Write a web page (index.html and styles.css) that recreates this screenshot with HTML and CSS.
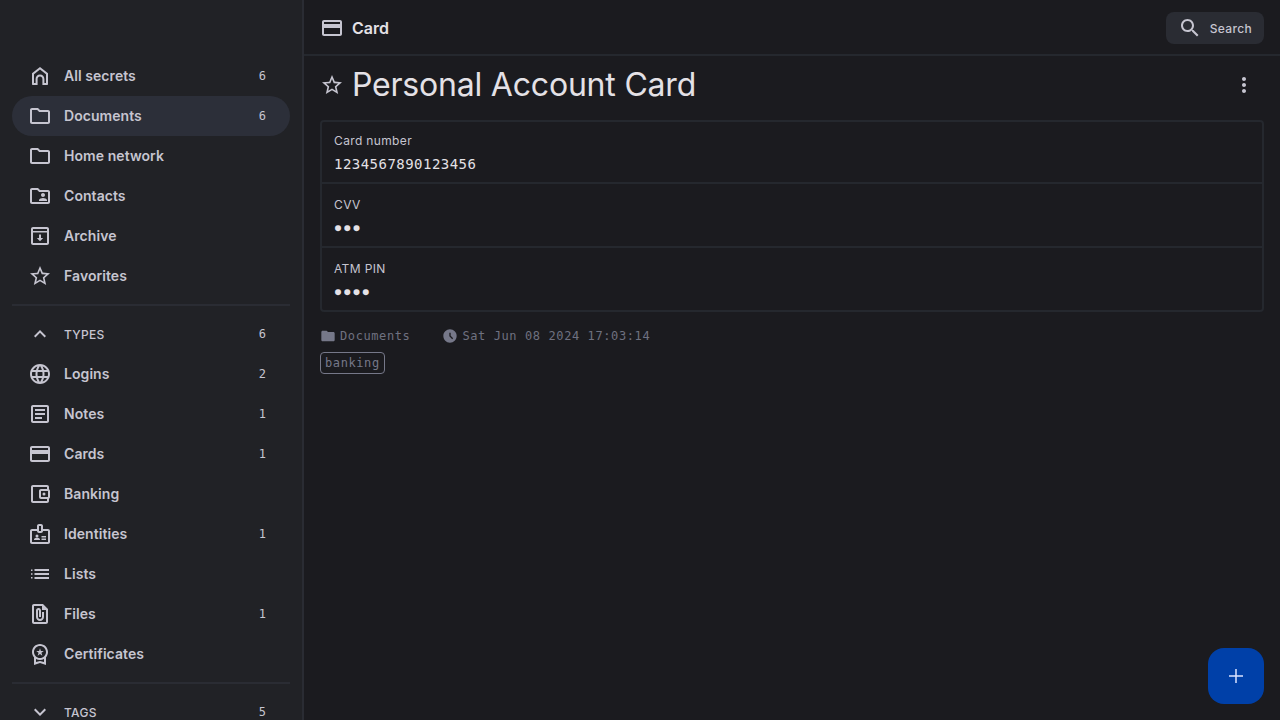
FILE: index.html
```html
<!DOCTYPE html>
<html lang="en">
<head>
  <meta charset="UTF-8" />
  <title>Personal Account Card</title>
  <link rel="stylesheet" href="styles.css">
</head>
<body>

<aside class="sidebar">
  <a class="nav-item">
    <svg class="icon" viewBox="0 0 24 24"><path d="M12 3 4 9.2V20c0 .6.4 1 1 1h4.600v-6c0-1.400 1-2.400 2.400-2.400s2.400 1 2.400 2.400v6H19c.6 0 1-.4 1-1V9.200zM12 5.500l6 4.700V19h-1.600v-4c0-2.500-1.900-4.400-4.400-4.400S7.600 12.500 7.600 15v4H6v-8.800z"/></svg>
    <span class="nav-label">All secrets</span><span class="count">6</span>
  </a>
  <a class="nav-item active">
    <svg class="icon" viewBox="0 0 24 24"><path d="M20 6h-8l-2-2H4c-1.100 0-1.990.9-1.990 2L2 18c0 1.100.9 2 2 2h16c1.100 0 2-.9 2-2V8c0-1.100-.9-2-2-2zm0 12H4V6h5.170l2 2H20v10z"/></svg>
    <span class="nav-label">Documents</span><span class="count">6</span>
  </a>
  <a class="nav-item">
    <svg class="icon" viewBox="0 0 24 24"><path d="M20 6h-8l-2-2H4c-1.100 0-1.990.9-1.990 2L2 18c0 1.100.9 2 2 2h16c1.100 0 2-.9 2-2V8c0-1.100-.9-2-2-2zm0 12H4V6h5.170l2 2H20v10z"/></svg>
    <span class="nav-label">Home network</span>
  </a>
  <a class="nav-item">
    <svg class="icon" viewBox="0 0 24 24"><path d="M20 6h-8l-2-2H4c-1.100 0-2 .9-2 2v12c0 1.100.9 2 2 2h16c1.100 0 2-.9 2-2V8c0-1.100-.9-2-2-2zm0 12H4V6h5.170l2 2H20v10zm-5-5c1.100 0 2-.9 2-2s-.9-2-2-2-2 .9-2 2 .9 2 2 2zm-4 4h8v-1c0-1.330-2.670-2-4-2s-4 .67-4 2v1z"/></svg>
    <span class="nav-label">Contacts</span>
  </a>
  <a class="nav-item">
    <svg class="icon" viewBox="0 0 24 24"><path d="M19 3H5c-1.100 0-2 .9-2 2v14c0 1.100.9 2 2 2h14c1.100 0 2-.9 2-2V5c0-1.100-.9-2-2-2zM5 5h14v2H5V5zm0 14V8.500h14V19H5zm8-8.500h-2V14H8.800l3.200 3.200 3.200-3.200H13v-3.500z"/></svg>
    <span class="nav-label">Archive</span>
  </a>
  <a class="nav-item">
    <svg class="icon" viewBox="0 0 24 24"><path d="M22 9.240l-7.190-.62L12 2 9.190 8.630 2 9.240l5.460 4.730L5.820 21 12 17.270 18.180 21l-1.630-7.030L22 9.240zM12 15.400l-3.760 2.270 1-4.280-3.320-2.880 4.380-.38L12 6.100l1.710 4.040 4.380.38-3.320 2.880 1 4.280L12 15.400z"/></svg>
    <span class="nav-label">Favorites</span>
  </a>

  <div class="divider"></div>

  <a class="nav-item section">
    <svg class="icon" viewBox="0 0 24 24"><path d="M12 8l-6 6 1.410 1.410L12 10.830l4.590 4.580L18 14z"/></svg>
    <span class="nav-label">TYPES</span><span class="count">6</span>
  </a>
  <a class="nav-item">
    <svg class="icon" viewBox="0 0 24 24"><path d="M11.990 2C6.470 2 2 6.480 2 12s4.470 10 9.990 10C17.520 22 22 17.520 22 12S17.520 2 11.990 2zm6.930 6h-2.950c-.32-1.250-.78-2.450-1.380-3.560 1.840.63 3.370 1.910 4.330 3.560zM12 4.040c.83 1.200 1.480 2.530 1.910 3.960h-3.820c.43-1.430 1.080-2.760 1.910-3.960zM4.260 14C4.100 13.360 4 12.690 4 12s.1-1.360.26-2h3.380c-.08.66-.14 1.320-.14 2 0 .68.06 1.340.14 2H4.260zm.82 2h2.950c.32 1.250.78 2.450 1.380 3.560-1.840-.63-3.370-1.900-4.330-3.560zm2.950-8H5.080c.96-1.660 2.490-2.930 4.330-3.560C8.810 5.550 8.350 6.750 8.030 8zM12 19.960c-.83-1.200-1.480-2.530-1.910-3.960h3.820c-.43 1.430-1.080 2.760-1.910 3.960zM14.340 14H9.660c-.09-.66-.16-1.320-.16-2 0-.68.07-1.350.16-2h4.680c.09.65.16 1.320.16 2 0 .68-.07 1.340-.16 2zm.25 5.560c.6-1.110 1.060-2.310 1.380-3.560h2.950c-.96 1.650-2.490 2.930-4.330 3.560zM16.360 14c.08-.66.14-1.320.14-2 0-.68-.06-1.340-.14-2h3.380c.16.64.26 1.310.26 2s-.1 1.360-.26 2h-3.380z"/></svg>
    <span class="nav-label">Logins</span><span class="count">2</span>
  </a>
  <a class="nav-item">
    <svg class="icon" viewBox="0 0 24 24"><path d="M19 5v14H5V5h14m0-2H5c-1.100 0-2 .9-2 2v14c0 1.100.9 2 2 2h14c1.100 0 2-.9 2-2V5c0-1.100-.9-2-2-2z"/><path d="M14 17H7v-2h7v2zm3-4H7v-2h10v2zm0-4H7V7h10v2z"/></svg>
    <span class="nav-label">Notes</span><span class="count">1</span>
  </a>
  <a class="nav-item">
    <svg class="icon" viewBox="0 0 24 24"><path d="M20 4H4c-1.110 0-1.990.89-1.990 2L2 18c0 1.110.89 2 2 2h16c1.110 0 2-.89 2-2V6c0-1.110-.89-2-2-2zm0 14H4v-6h16v6zm0-10H4V6h16v2z"/></svg>
    <span class="nav-label">Cards</span><span class="count">1</span>
  </a>
  <a class="nav-item">
    <svg class="icon" viewBox="0 0 24 24"><path d="M21 7.280V5c0-1.100-.9-2-2-2H5c-1.110 0-2 .9-2 2v14c0 1.100.89 2 2 2h14c1.100 0 2-.9 2-2v-2.280c.59-.35 1-.98 1-1.720V9c0-.74-.41-1.370-1-1.720zM20 9v6h-7V9h7zM5 19V5h14v2h-6c-1.100 0-2 .9-2 2v6c0 1.100.9 2 2 2h6v2H5z"/><circle cx="16" cy="12" r="1.500"/></svg>
    <span class="nav-label">Banking</span>
  </a>
  <a class="nav-item">
    <svg class="icon" viewBox="0 0 24 24"><path d="M20 7h-5V4c0-1.100-.9-2-2-2h-2c-1.100 0-2 .9-2 2v3H4c-1.100 0-2 .9-2 2v11c0 1.100.9 2 2 2h16c1.100 0 2-.9 2-2V9c0-1.100-.9-2-2-2zM11 4h2v5h-2V4zm9 16H4V9h5c0 1.100.9 2 2 2h2c1.100 0 2-.9 2-2h5v11z"/><circle cx="9" cy="14" r="1.500"/><path d="M11.080 16.180C10.440 15.900 9.740 15.750 9 15.750s-1.440.15-2.080.43C6.360 16.420 6 16.960 6 17.570V18h6v-.43c0-.61-.36-1.150-.92-1.390zM13.500 14H18v1.500h-4.500zM13.500 16.500H18V18h-4.500z"/></svg>
    <span class="nav-label">Identities</span><span class="count">1</span>
  </a>
  <a class="nav-item">
    <svg class="icon" viewBox="0 0 24 24"><path d="M3 7.500h1.500V9H3zM3 11.200h1.500v1.600H3zM3 15h1.500v1.500H3zM6.500 7h14.500v2H6.500zM6.500 11h14.500v2H6.500zM6.500 15h14.500v2H6.500z"/></svg>
    <span class="nav-label">Lists</span>
  </a>
  <a class="nav-item">
    <svg class="icon" viewBox="0 0 24 24"><path d="M15 2H6c-1.100 0-2 .9-2 2v16c0 1.110.89 2 1.990 2H18c1.100 0 2-.9 2-2V7l-5-5zM6 20V4h8v4h4v12H6zm10-10v5c0 2.210-1.790 4-4 4s-4-1.790-4-4V8.500c0-1.470 1.260-2.640 2.760-2.490 1.300.13 2.240 1.320 2.240 2.630V15h-2V8.500c0-.28-.22-.5-.5-.5s-.5.22-.5.5V15c0 1.100.9 2 2 2s2-.9 2-2v-5h2z"/></svg>
    <span class="nav-label">Files</span><span class="count">1</span>
  </a>
  <a class="nav-item">
    <svg class="icon" viewBox="0 0 24 24"><path d="M9.680 13.690L12 11.930l2.310 1.760-.88-2.850L15.750 9h-2.840L12 6.190 11.090 9H8.250l2.310 1.840-.88 2.850zM20 10c0-4.420-3.580-8-8-8s-8 3.580-8 8c0 2.030.76 3.870 2 5.280V23l6-2 6 2v-7.720c1.240-1.410 2-3.250 2-5.280zM12 4c3.310 0 6 2.690 6 6s-2.690 6-6 6-6-2.690-6-6 2.690-6 6-6zm0 15l-4 1.020v-3.100c1.180.68 2.540 1.080 4 1.080s2.820-.4 4-1.080v3.100L12 19z"/></svg>
    <span class="nav-label">Certificates</span>
  </a>

  <div class="divider"></div>

  <a class="nav-item section">
    <svg class="icon" viewBox="0 0 24 24"><path d="M16.590 8.590L12 13.170 7.410 8.590 6 10l6 6 6-6z"/></svg>
    <span class="nav-label">TAGS</span><span class="count">5</span>
  </a>
</aside>

<div class="content">
  <header class="topbar">
    <svg class="icon" viewBox="0 0 24 24"><path d="M20 4H4c-1.110 0-1.990.89-1.990 2L2 18c0 1.110.89 2 2 2h16c1.110 0 2-.89 2-2V6c0-1.110-.89-2-2-2zm0 14H4v-6h16v6zm0-10H4V6h16v2z"/></svg>
    <span class="topbar-title">Card</span>
    <button class="search-btn">
      <svg class="icon" viewBox="0 0 24 24"><path d="M15.500 14h-.79l-.28-.27C15.410 12.590 16 11.110 16 9.500 16 5.910 13.090 3 9.500 3S3 5.910 3 9.500 5.910 16 9.500 16c1.610 0 3.090-.59 4.230-1.570l.27.28v.79l5 4.990L20.490 19l-4.990-5zm-6 0C7.010 14 5 11.990 5 9.500S7.010 5 9.500 5 14 7.010 14 9.500 11.990 14 9.500 14z"/></svg>
      <span>Search</span>
    </button>
  </header>

  <main class="detail">
    <div class="title-row">
      <svg class="icon" viewBox="0 0 24 24"><path d="M22 9.240l-7.190-.62L12 2 9.190 8.630 2 9.240l5.460 4.730L5.820 21 12 17.270 18.180 21l-1.630-7.030L22 9.240zM12 15.400l-3.760 2.270 1-4.280-3.320-2.880 4.380-.38L12 6.100l1.710 4.040 4.380.38-3.320 2.880 1 4.280L12 15.400z"/></svg>
      <h1>Personal Account Card</h1>
      <svg class="icon more" viewBox="0 0 24 24"><path d="M12 8c1.100 0 2-.9 2-2s-.9-2-2-2-2 .9-2 2 .9 2 2 2zm0 2c-1.100 0-2 .9-2 2s.9 2 2 2 2-.9 2-2-.9-2-2-2zm0 6c-1.100 0-2 .9-2 2s.9 2 2 2 2-.9 2-2-.9-2-2-2z"/></svg>
    </div>

    <div class="fields">
      <div class="field">
        <div class="field-label">Card number</div>
        <div class="field-value">1234567890123456</div>
      </div>
      <div class="field">
        <div class="field-label">CVV</div>
        <div class="field-value dots">●●●</div>
      </div>
      <div class="field">
        <div class="field-label">ATM PIN</div>
        <div class="field-value dots">●●●●</div>
      </div>
    </div>

    <div class="meta">
      <span class="meta-item">
        <svg class="meta-icon" viewBox="0 0 24 24"><path d="M10 4H4c-1.100 0-1.990.9-1.990 2L2 18c0 1.100.9 2 2 2h16c1.100 0 2-.9 2-2V8c0-1.100-.9-2-2-2h-8l-2-2z"/></svg>
        Documents
      </span>
      <span class="meta-item">
        <svg class="meta-icon" viewBox="0 0 24 24"><path d="M11.990 2C6.470 2 2 6.480 2 12s4.470 10 9.990 10C17.520 22 22 17.520 22 12S17.520 2 11.990 2zm3.300 14.710L11 12.410V7h2v4.590l3.710 3.710-1.420 1.410z"/></svg>
        Sat Jun 08 2024 17:03:14
      </span>
    </div>
    <span class="tag">banking</span>
  </main>

  <button class="fab">
    <svg class="icon" viewBox="0 0 24 24"><path d="M19 12.750h-6.250V19h-1.500v-6.250H5v-1.500h6.250V5h1.500v6.250H19z"/></svg>
  </button>
</div>

</body>
</html>
```

FILE: styles.css
```css
* {
  margin: 0;
  padding: 0;
  box-sizing: border-box;
}

html, body {
  height: 100%;
  overflow: hidden;
}

body {
  display: flex;
  font-family: 'Inter', sans-serif;
  background: #1b1b1f;
  color: #e4e1e6;
}

.icon {
  width: 24px;
  height: 24px;
  flex-shrink: 0;
  fill: #c6c5d0;
}

/* Sidebar */
.sidebar {
  width: 304px;
  height: 100%;
  flex-shrink: 0;
  padding: 56px 12px 0;
  background: #212226;
  border-right: 2px solid #2a2c33;
  overflow: hidden;
}

.nav-item {
  display: flex;
  align-items: center;
  height: 40px;
  padding: 0 24px 0 16px;
  border-radius: 20px;
  color: #c6c5d0;
  font-size: 14px;
  font-weight: 600;
}

.nav-item.active {
  background: #2c2f39;
}

.nav-label {
  flex: 1;
  margin-left: 12px;
  padding-bottom: 2px;
  letter-spacing: 0.06px;
}

.count {
  font-family: 'DejaVu Sans Mono', monospace;
  font-size: 12px;
  font-weight: 400;
}

.section .nav-label {
  padding-bottom: 0;
  font-size: 12px;
  font-weight: 500;
  letter-spacing: 0.3px;
}

.divider {
  height: 2px;
  margin: 8px 0;
  background: #2a2c33;
}

/* Top bar */
.content {
  flex: 1;
  min-width: 0;
  position: relative;
}

.topbar {
  display: flex;
  align-items: center;
  height: 56px;
  padding: 2px 16px 0;
  border-bottom: 2px solid #25282e;
}

.topbar-title {
  flex: 1;
  margin-left: 8px;
  font-size: 16px;
  font-weight: 600;
}

.search-btn {
  display: flex;
  align-items: center;
  gap: 8px;
  height: 32px;
  padding: 0 12px;
  border: none;
  border-radius: 8px;
  background: #2a2c33;
  color: #c6c5d0;
  font-family: inherit;
  font-size: 12px;
  font-weight: 500;
  letter-spacing: 0.33px;
}

/* Detail */
.detail {
  padding: 0 16px;
}

.title-row {
  display: flex;
  align-items: center;
  height: 60px;
  margin-bottom: 4px;
  padding-bottom: 2px;
}

.title-row h1 {
  flex: 1;
  margin-left: 8px;
  padding-bottom: 2px;
  font-size: 32px;
  font-weight: 400;
  letter-spacing: -0.2px;
}

.more {
  margin-right: 8px;
}

.fields {
  border: 2px solid #25282e;
  border-radius: 4px;
}

.field {
  height: 64px;
  padding: 12px 12px 0;
  border-bottom: 2px solid #25282e;
}

.field:first-child {
  height: 62px;
  padding-top: 10px;
}

.field:last-child {
  height: 62px;
  border-bottom: none;
}

.field-label {
  height: 18px;
  line-height: 18px;
  font-size: 12px;
  font-weight: 400;
  letter-spacing: 0.36px;
  color: #c6c5d0;
}

.field-value {
  margin-top: 4px;
  height: 20px;
  line-height: 20px;
  font-family: 'DejaVu Sans Mono', monospace;
  font-size: 14px;
  letter-spacing: 0.47px;
  color: #e4e1e6;
}

.field-value.dots {
  font-size: 10px;
  padding-left: 1px;
  letter-spacing: 3.2px;
}

.meta {
  display: flex;
  align-items: center;
  gap: 32px;
  height: 20px;
  margin-top: 14px;
}

.meta-item {
  display: flex;
  align-items: center;
  gap: 4px;
  font-family: 'DejaVu Sans Mono', monospace;
  font-size: 12px;
  letter-spacing: 0.6px;
  color: #6f7180;
}

.meta-icon {
  width: 16px;
  height: 16px;
  fill: #767889;
}

.tag {
  display: inline-block;
  margin-top: 6px;
  padding: 0 4px;
  height: 22px;
  line-height: 20px;
  border: 1px solid #767889;
  border-radius: 4px;
  font-family: 'DejaVu Sans Mono', monospace;
  font-size: 12px;
  letter-spacing: 0.6px;
  color: #767889;
}

/* Floating add button sits over the page */
.fab {
  position: absolute;
  right: 16px;
  bottom: 16px;
  display: flex;
  align-items: center;
  justify-content: center;
  width: 56px;
  height: 56px;
  border: none;
  border-radius: 16px;
  background: #0040a8;
}

.fab .icon {
  fill: #dae2ff;
}
```
